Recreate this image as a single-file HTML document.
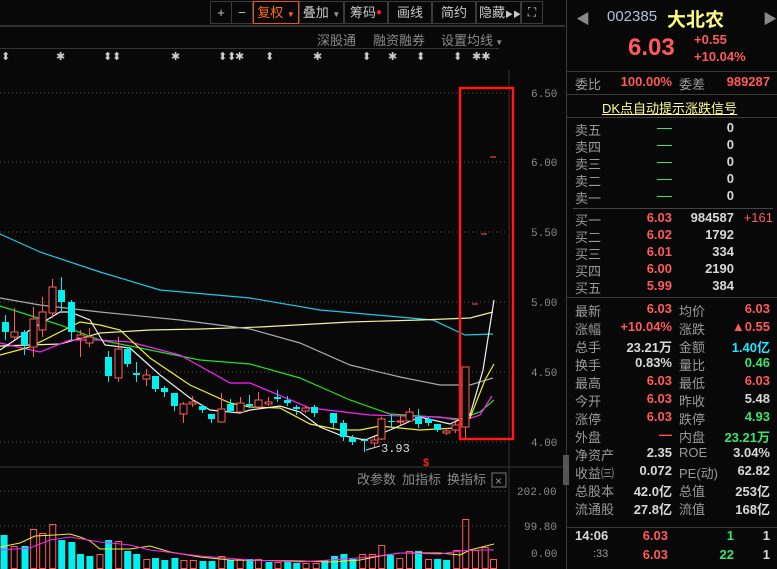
<!DOCTYPE html>
<html><head><meta charset="utf-8"><style>
*{margin:0;padding:0;box-sizing:border-box}
body{width:777px;height:569px;background:#080808;overflow:hidden;position:relative;font-family:"Liberation Sans","Noto Sans CJK SC",sans-serif;color:#c8c8c8}
.a{position:absolute;white-space:nowrap}
.btn{position:absolute;top:1px;height:23px;border:1px solid #3a3a3a;color:#c8c8c8;font-size:13px;line-height:21px;text-align:center;white-space:nowrap;overflow:hidden}
.p{position:absolute;left:567px;width:210px}
.l{position:absolute;font-size:13px;color:#9a9a9a;white-space:nowrap}
.r{position:absolute;font-size:13px;text-align:right;font-weight:bold;white-space:nowrap}
.red{color:#ff5a5a}.grn{color:#3ce36a}.wht{color:#d8d8d8}.cy{color:#22e6ff}
.hl{position:absolute;left:567px;width:210px;height:1px;background:#3a3a3a}
</style></head><body>
<div class="btn" style="left:210px;width:22px">+</div>
<div class="btn" style="left:231px;width:22px">−</div>
<div class="btn" style="left:253px;width:46px;border-color:#e05a10;color:#ff6a1a">复权 <span style="font-size:8px">▼</span></div>
<div class="btn" style="left:299px;width:45px">叠加 <span style="font-size:8px;color:#999">▼</span></div>
<div class="btn" style="left:344px;width:44px">筹码<span style="color:#ff2020;font-size:10px;vertical-align:top">●</span></div>
<div class="btn" style="left:388px;width:44px">画线</div>
<div class="btn" style="left:432px;width:44px">简约</div>
<div class="btn" style="left:476px;width:45px;text-align:left;padding-left:2px">隐藏<span style="font-size:8px">▶▶</span></div>
<div class="btn" style="left:521px;width:22px;font-size:12px">⛶</div>
<div class="a" style="left:0;top:25px;width:565px;height:2px;background:#333"></div>
<div class="a" style="left:317px;top:30px;font-size:13px;color:#8a8a8a">深股通</div>
<div class="a" style="left:373px;top:30px;font-size:13px;color:#8a8a8a">融资融券</div>
<div class="a" style="left:441px;top:30px;font-size:13px;color:#8a8a8a">设置均线<span style="font-size:8px"> ▼</span></div>
<div class="a" style="left:0;top:48px;width:499px;height:1px;background:#333"></div>
<svg class="a" style="left:0;top:0" width="566" height="569">
<g fill="#ccc" font-size="11" font-family="DejaVu Sans">
<text x="1" y="60">⬍</text><text x="56" y="60">✱</text><text x="103" y="60">⬍</text><text x="112" y="60">⬍</text><text x="171" y="60">✱</text><text x="218" y="60">⬍</text><text x="227" y="60">⬍</text><text x="235" y="60">✱</text><text x="265" y="60">⬍</text><text x="313" y="60">✱</text><text x="362" y="60">⬍</text><text x="388" y="60">✱</text><text x="416" y="60">⬍</text><text x="453" y="60">⬍</text><text x="472" y="60">✱✱</text>
</g>
<line x1="509" y1="70" x2="509" y2="569" stroke="#333"/>
<g stroke="#555" stroke-dasharray="1,3">
<line x1="0" y1="93" x2="508" y2="93"/><line x1="0" y1="162" x2="508" y2="162"/><line x1="0" y1="232" x2="508" y2="232"/><line x1="0" y1="302" x2="508" y2="302"/><line x1="0" y1="372" x2="508" y2="372"/><line x1="0" y1="442" x2="508" y2="442"/>
<line x1="0" y1="491" x2="508" y2="491"/><line x1="0" y1="526" x2="508" y2="526"/>
</g>
<g fill="#8a8a8a" font-size="11" font-family="Liberation Mono">
<text x="531" y="97">6.50</text><text x="531" y="166">6.00</text><text x="531" y="236">5.50</text><text x="531" y="306">5.00</text><text x="531" y="376">4.50</text><text x="531" y="446">4.00</text>
<text x="517" y="495">202.00</text><text x="524" y="530">99.80</text><text x="531" y="557">0.00</text>
</g>
<g fill="none" stroke-width="1.2">
<polyline stroke="#1ec8e6" points="0,234 40,252 100,272 160,290 250,298 320,310 433,320 465,335 493,334"/>
<polyline stroke="#f0f0a0" points="0,346 60,344 100,333 150,330 200,329 260,327 350,322 420,320 470,318 493,312"/>
<polyline stroke="#aaa" points="0,298 40,305 100,312 180,320 250,329 300,343 350,365 400,377 440,385 470,385 493,378"/>
<polyline stroke="#20e020" points="0,306 60,325 100,340 150,350 200,360 250,364 300,378 350,400 390,414 420,416 460,419 480,412 494,400"/>
<polyline stroke="#ff20ff" points="0,343 40,352 70,340 100,340 130,342 180,355 230,383 250,383 310,408 370,415 440,417 462,421 480,415 492,396"/>
<polyline stroke="#f0f020" points="0,355 30,347 80,322 100,325 120,330 150,358 190,385 230,403 250,407 280,408 310,424 340,430 360,430 380,426 420,430 455,428 470,418 485,380 494,364"/>
<polyline stroke="#f0f0f0" points="0,350 30,330 60,312 70,312 90,320 105,345 130,348 160,375 190,398 210,410 240,413 250,410 280,406 300,412 320,427 340,435 365,440 390,430 420,417 450,424 470,415 483,370 494,300"/>
</g>
<g id="c"></g>
<text x="381" y="452" fill="#ddd" font-size="12" font-family="Liberation Mono">3.93</text>
<line x1="380" y1="446" x2="366" y2="450" stroke="#ddd"/>
<text x="423" y="466" fill="#ff2020" font-size="11" font-weight="bold">$</text>
<line x1="472" y1="304" x2="478" y2="304" stroke="#ff5a5a"/><line x1="481" y1="234" x2="487" y2="234" stroke="#ff5a5a"/><line x1="490" y1="157" x2="496" y2="157" stroke="#ff5a5a"/>
<rect x="460" y="88" width="53" height="351" fill="none" stroke="#ff1a1a" stroke-width="2.5"/>
<line x1="0" y1="467" x2="566" y2="467" stroke="#333"/>
<g fill="#8a8a8a" font-size="13"><text x="357" y="484">改参数</text><text x="402" y="484">加指标</text><text x="447" y="484">换指标</text></g>
<rect x="492" y="473" width="14" height="14" fill="none" stroke="#777"/><text x="495" y="485" fill="#999" font-size="12">×</text>
<g id="v"></g>
<polyline fill="none" stroke="#f0f020" points="0,547 20,543 35,536 55,535 70,534 80,537 90,541 100,549 130,549 150,546 170,552 200,557 230,560 300,561 330,562 360,560 380,556 400,553 440,553 460,555 470,550 490,545 494,544"/>
<polyline fill="none" stroke="#ff20ff" points="0,550 30,548 50,540 70,537 100,542 130,545 150,550 200,556 250,560 300,562 330,560 370,557 400,553 440,554 460,551 480,550 494,550"/>
</svg>
<div class="a" style="left:566px;top:0;width:1px;height:569px;background:#3a3a3a"></div>
<div class="a" style="left:563px;top:455px;width:6px;height:30px;background:#555"></div>
<div class="a" style="left:576px;top:9px;color:#888;font-size:14px">◀</div>
<div class="a" style="left:763px;top:9px;color:#888;font-size:14px">▶</div>
<div class="a" style="left:607px;top:8px;font-size:15px;color:#b0c4d8">002385</div>
<div class="a" style="left:667px;top:5px;font-size:19px;font-weight:bold;color:#ffff80">大北农</div>
<div class="a red" style="left:628px;top:34px;font-size:24px;font-weight:bold">6.03</div>
<div class="a red" style="left:694px;top:32px;font-size:13px;font-weight:bold">+0.55</div>
<div class="a red" style="left:694px;top:49px;font-size:13px;font-weight:bold">+10.04%</div>
<div class="hl" style="top:71px"></div>
<div class="l" style="left:575px;top:74px">委比</div><div class="r red" style="left:610px;top:74px;width:62px">100.00%</div>
<div class="l" style="left:679px;top:74px">委差</div><div class="r red" style="left:710px;top:74px;width:60px">989287</div>
<div class="hl" style="top:94px"></div>
<div class="a" style="left:602px;top:98px;font-size:13px;color:#ffff90;text-decoration:underline">DK点自动提示涨跌信号</div>
<div class="hl" style="top:117px"></div>
<div id="ob"></div>
<div class="a" style="left:573px;top:208px;width:200px;height:1px;background:#444"></div>
<div class="hl" style="top:297px"></div>
<div id="st"></div>
<div class="hl" style="top:527px"></div>
<div class="a wht" style="left:575px;top:528px;font-size:13px;font-weight:bold">14:06</div>
<div class="r red" style="left:600px;top:528px;width:68px">6.03</div>
<div class="r grn" style="left:700px;top:528px;width:34px">1</div>
<div class="r wht" style="left:740px;top:528px;width:30px">1</div>
<div class="a" style="left:593px;top:548px;font-size:11px;color:#999">:33</div>
<div class="r red" style="left:600px;top:547px;width:68px">6.03</div>
<div class="r grn" style="left:700px;top:547px;width:34px">22</div>
<div class="r wht" style="left:740px;top:547px;width:30px">1</div>
<script>
var ns="http://www.w3.org/2000/svg";
function el(p,t,a){var e=document.createElementNS(ns,t);for(var k in a)e.setAttribute(k,a[k]);p.appendChild(e);}
var c=document.getElementById("c");
var K=[[5,322,332,315,340,0],[14,332,337,308,340,1],[24,332,345,330,355,0],[33,319,347,307,357,1],[42,312,330,297,337,1],[52,287,313,279,318,1],[61,290,302,277,312,0],[71,302,332,300,340,0],[80,335,338,330,357,1],[89,337,343,328,347,1],[108,357,376,351,382,0],[118,349,378,337,382,1],[127,349,364,347,367,0],[136,373,375,362,382,0],[146,375,379,369,386,1],[155,376,389,376,392,0],[164,388,392,386,397,0],[174,393,406,393,411,0],[183,404,414,402,423,1],[192,402,404,396,407,1],[202,406,410,405,413,0],[211,414,419,414,423,0],[221,409,422,393,422,1],[230,404,411,399,413,0],[240,403,412,397,412,1],[249,404,406,395,408,0],[258,400,407,392,407,1],[268,402,404,397,406,1],[277,397,399,390,402,0],[287,400,403,396,406,0],[296,407,409,405,415,0],[305,408,411,406,413,1],[314,407,413,405,417,0],[333,413,423,413,428,0],[343,423,437,420,441,0],[352,438,442,435,445,0],[364,440,441,438,452,0],[374,440,443,437,447,1],[381,419,439,417,440,1],[391,421,422,414,427,0],[400,421,422,415,425,1],[409,412,421,408,421,1],[418,417,424,409,428,0],[428,419,423,417,426,0],[437,424,430,424,432,0],[446,431,433,428,435,1],[455,425,430,422,433,1],[465,367,427,367,438,1]];
K.forEach(function(k){var col=k[5]?"#ff5a5a":"#00f0f0";
el(c,"line",{x1:k[0]+.5,y1:k[3],x2:k[0]+.5,y2:k[4],stroke:col});
var h=Math.max(1,k[2]-k[1]);
if(k[5])el(c,"rect",{x:k[0]-3,y:k[1],width:7,height:h,fill:"#080808",stroke:col});
else el(c,"rect",{x:k[0]-3,y:k[1],width:7,height:h,fill:col});});
var v=document.getElementById("v");
var V=[[10,535,0],[38,546,1],[68,546,0],[92,529,1],[117,533,1],[145,524,1],[170,540,0],[198,542,0],[222,554,0],[248,556,0],[276,554,1],[300,540,0],[328,541,1],[353,551,0],[378,554,0],[406,559,1],[430,558,0],[456,560,0],[484,558,0],[509,560,1],[535,560,1],[562,561,0],[587,561,0],[614,556,1],[638,560,0],[665,559,1],[692,559,0],[716,559,1],[745,562,0],[770,562,1],[797,561,0],[822,563,0],[848,563,1],[876,563,1],[900,560,0],[927,556,0],[953,554,0],[978,559,0],[1005,554,1],[1032,554,1],[1058,545,1],[1082,555,0],[1108,558,1],[1135,551,1],[1160,551,0],[1188,559,1],[1213,559,0],[1238,560,0],[1266,550,1],[1291,519,1],[1318,550,1],[1345,547,1],[1368,559,1]];
V.forEach(function(b){var x=b[0]/2.775-3;var col=b[2]?"#ff5a5a":"#00f0f0";
if(b[2])el(v,"rect",{x:x+.5,y:b[1]+.5,width:6,height:568-b[1],fill:"none",stroke:col});
else el(v,"rect",{x:x,y:b[1],width:7,height:569-b[1],fill:col});});
var ob=document.getElementById("ob"),h="";
var S=["卖五","卖四","卖三","卖二","卖一"];
S.forEach(function(s,i){var y=120+i*17;
h+='<div class="l" style="left:575px;top:'+y+'px">'+s+'</div><div class="a" style="left:657px;top:'+(y+8)+'px;width:15px;height:1px;background:#3ce36a"></div><div class="r wht" style="left:700px;top:'+y+'px;width:34px">0</div>';});
var B=[["买一","6.03","984587"],["买二","6.02","1792"],["买三","6.01","334"],["买四","6.00","2190"],["买五","5.99","384"]];
B.forEach(function(b,i){var y=210+i*17;
h+='<div class="l" style="left:575px;top:'+y+'px">'+b[0]+'</div><div class="r red" style="left:620px;top:'+y+'px;width:52px">'+b[1]+'</div><div class="r wht" style="left:670px;top:'+y+'px;width:64px">'+b[2]+'</div>';});
h+='<div class="r" style="left:735px;top:210px;width:38px;color:#ff5a5a;font-weight:normal">+161</div>';
ob.innerHTML=h;
var T=[["最新","6.03","red","均价","6.03","red"],["涨幅","+10.04%","red","涨跌","▲0.55","red"],["总手","23.21万","wht","金额","1.40亿","cy"],["换手","0.83%","wht","量比","0.46","grn"],["最高","6.03","red","最低","6.03","red"],["今开","6.03","red","昨收","5.48","wht"],["涨停","6.03","red","跌停","4.93","grn"],["外盘","—","red","内盘","23.21万","grn"],["净资产","2.35","wht","ROE","3.04%","wht"],["收益㈢","0.072","wht","PE(动)","62.82","wht"],["总股本","42.0亿","wht","总值","253亿","wht"],["流通股","27.8亿","wht","流值","168亿","wht"]];
h="";T.forEach(function(t,i){var y=301+i*18;
h+='<div class="l" style="left:575px;top:'+y+'px">'+t[0]+'</div><div class="r '+t[2]+'" style="left:600px;top:'+y+'px;width:72px">'+t[1]+'</div><div class="l" style="left:679px;top:'+y+'px">'+t[3]+'</div><div class="r '+t[5]+'" style="left:700px;top:'+y+'px;width:70px">'+t[4]+'</div>';});
document.getElementById("st").innerHTML=h;
</script>
</body></html>
